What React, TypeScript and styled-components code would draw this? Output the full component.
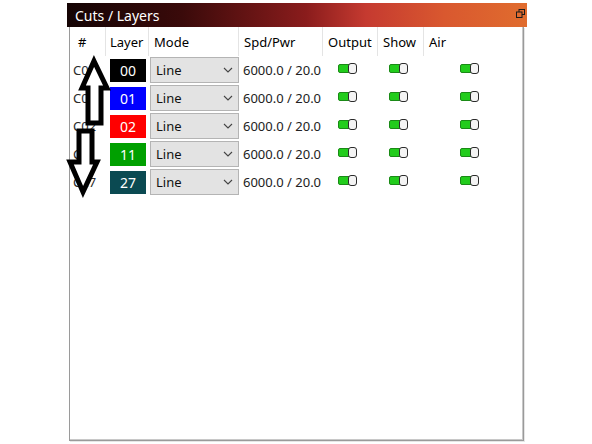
import styled, { createGlobalStyle } from 'styled-components';

type Cut = {
  id: string;
  layer: string;
  color: string;
  mode: string;
  spdPwr: string;
};

const cuts: Cut[] = [
  { id: 'C00', layer: '00', color: '#000000', mode: 'Line', spdPwr: '6000.0 / 20.0' },
  { id: 'C01', layer: '01', color: '#0000ff', mode: 'Line', spdPwr: '6000.0 / 20.0' },
  { id: 'C02', layer: '02', color: '#ff0000', mode: 'Line', spdPwr: '6000.0 / 20.0' },
  { id: 'C11', layer: '11', color: '#00a000', mode: 'Line', spdPwr: '6000.0 / 20.0' },
  { id: 'C27', layer: '27', color: '#0b4a52', mode: 'Line', spdPwr: '6000.0 / 20.0' },
];

const columns = '36px 43px 90px 84px 55px 46px 1fr';

const GlobalStyle = createGlobalStyle`
  html, body {
    margin: 0;
    padding: 0;
    background: #ffffff;
  }
  body {
    font-family: "Noto Sans", "Open Sans", Arial, sans-serif;
  }
`;

const Toggle = () => (
  <ToggleStyle>
    <span className='on' />
    <span className='knob' />
  </ToggleStyle>
);

const Arrows = () => (
  <ArrowLayer width='120' height='210' viewBox='0 0 120 210'>
    <path
      d='M94 61 L107 88 L101 88 L101 123 L88 123 L88 88 L82 88 Z'
      fill='#ffffff'
      stroke='#000000'
      strokeWidth='5'
      strokeLinejoin='miter'
    />
    <path
      d='M79 131 L92 131 L92 162 L97 162 L83 192 L70 162 L79 162 Z'
      fill='#ffffff'
      stroke='#000000'
      strokeWidth='5'
      strokeLinejoin='miter'
    />
  </ArrowLayer>
);

const App = () => {
  return (
    <>
      <GlobalStyle />
      <Page>
        <Window>
          <TitleBar>
            <span>Cuts / Layers</span>
            <svg width='9' height='9' viewBox='0 0 9 9'>
              <rect x='3' y='0.5' width='5.5' height='5' fill='none' stroke='#1a1a1a' strokeWidth='1' />
              <rect x='0.5' y='3' width='5.5' height='5.5' fill='#e06a2e' stroke='#1a1a1a' strokeWidth='1' />
            </svg>
          </TitleBar>
          <PanelBody>
            <HeaderRow>
              <HeaderCell $pad={8}>#</HeaderCell>
              <HeaderCell $pad={4}>Layer</HeaderCell>
              <HeaderCell>Mode</HeaderCell>
              <HeaderCell>Spd/Pwr</HeaderCell>
              <HeaderCell>Output</HeaderCell>
              <HeaderCell>Show</HeaderCell>
              <HeaderCell $last>Air</HeaderCell>
            </HeaderRow>
            {cuts.map((cut) => (
              <CutRow key={cut.id}>
                <IdCell>{cut.id}</IdCell>
                <SwatchCell>
                  <Swatch $color={cut.color}>{cut.layer}</Swatch>
                </SwatchCell>
                <ModeSelect>
                  <span>{cut.mode}</span>
                  <svg width='10' height='6' viewBox='0 0 10 6'>
                    <path d='M1 1 L5 5 L9 1' fill='none' stroke='#444' strokeWidth='1.1' />
                  </svg>
                </ModeSelect>
                <SpdCell>{cut.spdPwr}</SpdCell>
                <ToggleCell $shift={-3}>
                  <Toggle />
                </ToggleCell>
                <ToggleCell $shift={-3}>
                  <Toggle />
                </ToggleCell>
                <ToggleCell $shift={-4}>
                  <Toggle />
                </ToggleCell>
              </CutRow>
            ))}
          </PanelBody>
        </Window>
        <Arrows />
      </Page>
    </>
  );
};

export default App;

const Page = styled.div`
  position: relative;
  width: 592px;
  height: 444px;
  padding: 3px 0 0 67px;
  box-sizing: border-box;
`;

const Window = styled.div`
  width: 460px;
  display: flex;
  flex-direction: column;
`;

const TitleBar = styled.div`
  height: 24px;
  display: flex;
  align-items: center;
  justify-content: space-between;
  padding: 0 2px 0 8px;
  color: #ffffff;
  font-size: 14px;
  background: linear-gradient(
    90deg,
    #140404 0%,
    #3a0a0a 25%,
    #8a1c1c 52%,
    #c53a30 65%,
    #d9582f 82%,
    #e06c2e 100%
  );

  svg {
    margin-bottom: 4px;
  }
`;

const PanelBody = styled.div`
  margin: 0 3px 0 2px;
  height: 413px;
  border: 1px solid #9a9a9a;
  border-top: none;
  box-shadow: inset -1px -1px 0 #c8c8c8, 1px 1px 0 #e6e6e6;
  background: #ffffff;
  color: #1e1e1e;
  font-size: 13px;
`;

const HeaderRow = styled.div`
  display: grid;
  grid-template-columns: ${columns};
  height: 29px;
`;

const HeaderCell = styled.div<{ $pad?: number; $last?: boolean }>`
  display: flex;
  align-items: center;
  padding-left: ${({ $pad }) => $pad ?? 5}px;
  border-right: ${({ $last }) => ($last ? 'none' : '1px solid #e4e4e4')};
  color: #000000;
  font-size: 13px;
`;

const CutRow = styled.div`
  display: grid;
  grid-template-columns: ${columns};
  height: 28px;
  align-items: center;
`;

const IdCell = styled.div`
  padding-left: 3px;
  color: #2a2a2a;
`;

const SwatchCell = styled.div`
  padding-left: 4px;
`;

const Swatch = styled.div<{ $color: string }>`
  width: 36px;
  height: 23px;
  display: flex;
  align-items: center;
  justify-content: center;
  background: ${({ $color }) => $color};
  color: #ffffff;
  font-size: 14px;
`;

const ModeSelect = styled.div`
  height: 26px;
  margin-left: 1px;
  display: flex;
  align-items: center;
  justify-content: space-between;
  padding: 0 5px 0 5px;
  box-sizing: border-box;
  background: #e3e3e3;
  border: 1px solid #b4b4b4;
  color: #111111;
  font-size: 13px;
`;

const SpdCell = styled.div`
  padding-left: 4px;
  white-space: nowrap;
  color: #222222;
`;

const ToggleCell = styled.div<{ $shift: number }>`
  display: flex;
  justify-content: center;
  transform: translateX(${({ $shift }) => $shift}px);
`;

const ToggleStyle = styled.div`
  position: relative;
  width: 19px;
  height: 11px;
  margin-top: -4px;

  .on {
    position: absolute;
    left: 0;
    top: 1px;
    width: 13px;
    height: 9px;
    border-radius: 2px 0 0 2px;
    background: #22cc1c;
    border: 1px solid #1a8a16;
    box-sizing: border-box;
  }

  .knob {
    position: absolute;
    right: 0;
    top: 0;
    width: 9px;
    height: 11px;
    border-radius: 3px;
    background: #f4f4f4;
    border: 1.5px solid #2b2b2b;
    box-sizing: border-box;
  }
`;

const ArrowLayer = styled.svg`
  position: absolute;
  left: 0;
  top: 0;
  pointer-events: none;
`;
